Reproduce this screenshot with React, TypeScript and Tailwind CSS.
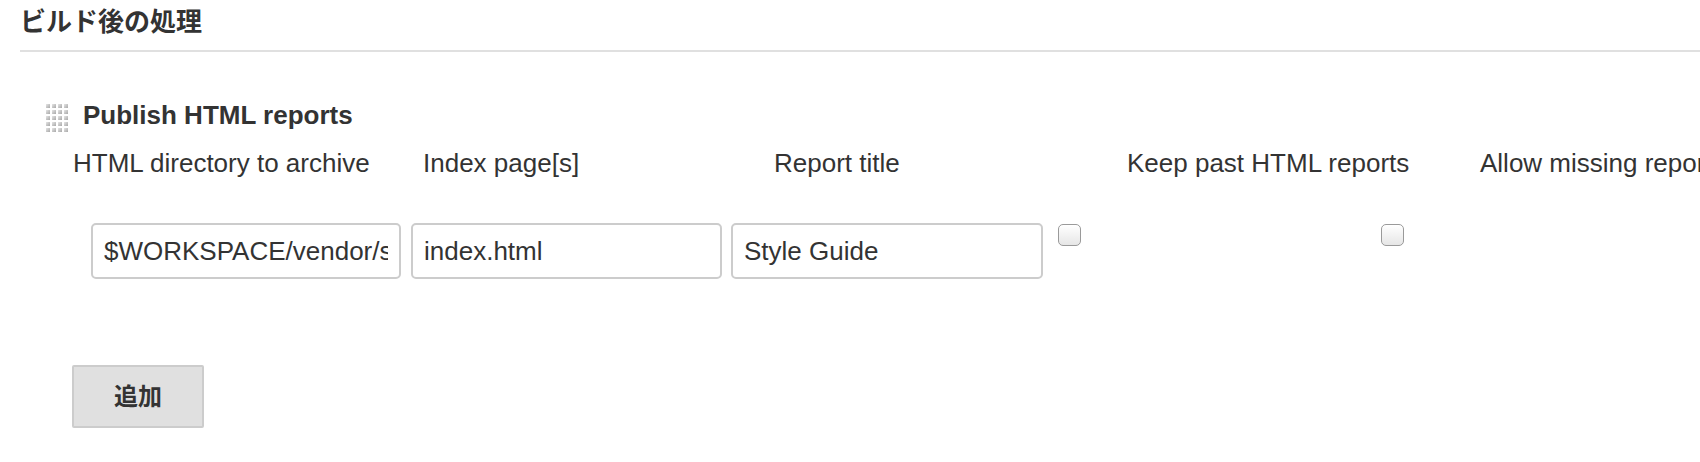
import React from 'react'

const font = 'font-["Liberation_Sans","Noto_Sans_CJK_JP",sans-serif]'

function DragHandle() {
  // 4 x 5 grid of small shaded squares
  const cells = []
  for (let r = 0; r < 5; r++) {
    for (let c = 0; c < 4; c++) {
      cells.push(
        <rect key={`${r}-${c}`} x={c * 6} y={r * 6} width={4} height={4} fill="url(#dh)" />
      )
    }
  }
  return (
    <svg width="22" height="28" viewBox="0 0 22 28" className="mt-[4px] shrink-0">
      <defs>
        <linearGradient id="dh" x1="0" y1="0" x2="1" y2="1">
          <stop offset="0" stopColor="#e6e6e6" />
          <stop offset="1" stopColor="#a8a8a8" />
        </linearGradient>
      </defs>
      {cells}
    </svg>
  )
}

function TextInput({ value, width }: { value: string; width: string }) {
  return (
    <input
      type="text"
      defaultValue={value}
      className={`${width} h-[56px] shrink-0 rounded-[5px] border-2 border-[#cccccc] bg-white px-[11px] text-[26px] text-[#333333] outline-none ${font}`}
    />
  )
}

function Checkbox() {
  return (
    <input
      type="checkbox"
      className="mt-[1px] h-[22px] w-[23px] shrink-0 appearance-none rounded-[5px] border border-[#9a9a9a] bg-gradient-to-b from-white to-[#e6e6e6] shadow-[inset_0_1px_0_#ffffff]"
    />
  )
}

export default function App() {
  return (
    <div className={`h-[462px] w-[1700px] overflow-hidden whitespace-nowrap bg-white text-[#333333] ${font}`}>
      {/* Section header */}
      <div className="ml-[20px] border-b-2 border-[#e0e0e0] pb-[13px] pt-[7px]">
        <h2 className="text-[26px] font-bold leading-[30px]">ビルド後の処理</h2>
      </div>

      {/* Publisher block */}
      <div className="mt-[48px] flex items-start gap-[15px] pl-[46px]">
        <DragHandle />
        <h3 className="text-[26px] font-bold leading-[30px]">Publish HTML reports</h3>
      </div>

      {/* Column headers */}
      <div className="mt-[16px] flex pl-[73px] text-[26px] leading-[30px]">
        <span className="w-[350px] shrink-0">HTML directory to archive</span>
        <span className="w-[351px] shrink-0">Index page[s]</span>
        <span className="w-[353px] shrink-0">Report title</span>
        <span className="w-[353px] shrink-0">Keep past HTML reports</span>
        <span className="shrink-0">Allow missing reports</span>
      </div>

      {/* Entry row */}
      <div className="mt-[45px] flex items-start pl-[91px]">
        <TextInput value="$WORKSPACE/vendor/styleguide" width="w-[310px]" />
        <div className="w-[10px] shrink-0" />
        <TextInput value="index.html" width="w-[311px]" />
        <div className="w-[9px] shrink-0" />
        <TextInput value="Style Guide" width="w-[312px]" />
        <div className="w-[15px] shrink-0" />
        <Checkbox />
        <div className="w-[300px] shrink-0" />
        <Checkbox />
      </div>

      {/* Add button */}
      <div className="mt-[86px] pl-[72px]">
        <button
          type="button"
          className="h-[63px] w-[132px] rounded-[2px] border-2 border-[#cccccc] bg-[#e0e0e0] text-[24px] font-bold text-[#333333]"
        >
          追加
        </button>
      </div>
    </div>
  )
}
